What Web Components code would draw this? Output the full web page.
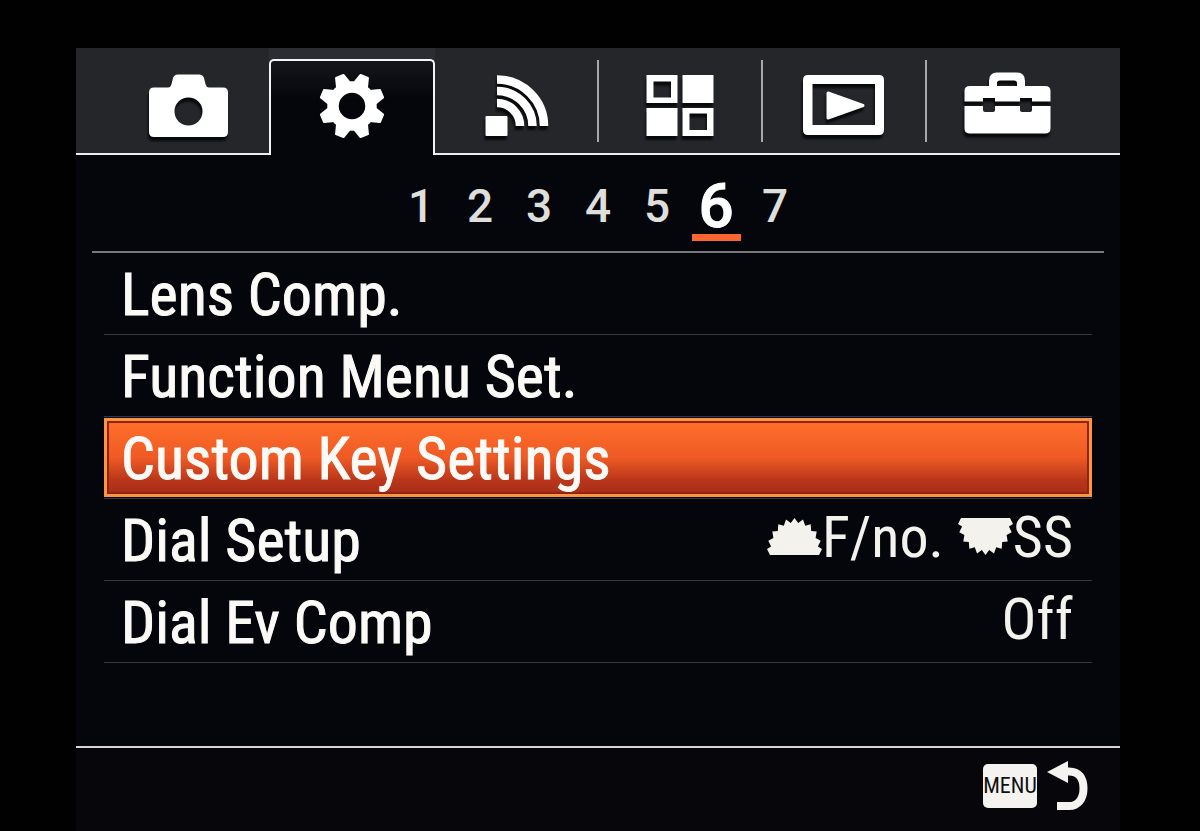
<!DOCTYPE html>
<html lang="en">
<head>
<meta charset="utf-8">
<meta name="viewport" content="width=device-width, initial-scale=1">
<title>Camera menu</title>
<style>
    body {
        margin: 0;
        background: #010102;
        color: #fbfaf7;
        font-family: "Roboto Condensed", Roboto, sans-serif;
    }
</style>
</head>
<body>

<camera-screen>
    <menu-tab slot="tabs" label="Camera settings">
        <svg viewBox="0 0 96 72"><path fill-rule="evenodd" d="M14 17.500H28Q30.500 17.500 31.500 14L33 8Q34 4.500 38 4.500H59Q63 4.500 64 8L65.500 14Q66.500 17.500 69 17.500H83Q88 17.500 88 22.500V62Q88 67 83 67H14Q9 67 9 62V22.500Q9 17.500 14 17.500ZM48.500 27.500A14 14 0 1 0 48.500 55.500A14 14 0 1 0 48.500 27.500Z"/></svg>
    </menu-tab>
    <menu-tab slot="tabs" label="Custom settings" active>
        <svg viewBox="0 0 96 72">
            <g transform="translate(48 36)">
                <circle r="19" fill="none" stroke="#fff" stroke-width="11.500"/>
                <g stroke="#fff" stroke-width="2" stroke-linejoin="round">
                    <path transform="rotate(22.500)" d="M-7-22L-4-32H4L7-22Z"/>
                    <path transform="rotate(67.500)" d="M-7-22L-4-32H4L7-22Z"/>
                    <path transform="rotate(112.500)" d="M-7-22L-4-32H4L7-22Z"/>
                    <path transform="rotate(157.500)" d="M-7-22L-4-32H4L7-22Z"/>
                    <path transform="rotate(202.500)" d="M-7-22L-4-32H4L7-22Z"/>
                    <path transform="rotate(247.500)" d="M-7-22L-4-32H4L7-22Z"/>
                    <path transform="rotate(292.500)" d="M-7-22L-4-32H4L7-22Z"/>
                    <path transform="rotate(337.500)" d="M-7-22L-4-32H4L7-22Z"/>
                </g>
            </g>
        </svg>
    </menu-tab>
    <menu-tab slot="tabs" label="Wireless">
        <svg viewBox="0 0 96 72">
            <g fill="none" stroke="#fff" stroke-width="8.500">
                <path d="M29 9.500A47 46.500 0 0 1 76 56"/>
                <path d="M29 21A35.500 35 0 0 1 64.500 56"/>
                <path d="M29 33A23 23 0 0 1 52 56"/>
            </g>
            <rect x="17.500" y="46" width="22" height="20" rx="1"/>
        </svg>
    </menu-tab>
    <menu-tab slot="tabs" label="Applications" divider>
        <svg viewBox="0 0 96 72"><path fill-rule="evenodd" d="M14.500 5h31v28h-31ZM21.500 11.500v16H39v-16ZM50.500 5h31v28h-31ZM14.500 38h31v28h-31ZM50.500 38h31v28h-31ZM57.500 43.500V60H75V43.500Z"/></svg>
    </menu-tab>
    <menu-tab slot="tabs" label="Playback" divider>
        <svg viewBox="0 0 96 72">
            <path fill-rule="evenodd" d="M12 5H83Q88 5 88 10V60Q88 65 83 65H12Q7 65 7 60V10Q7 5 12 5ZM16.500 14V55H79V14Z"/>
            <path d="M32 23L67 35.500L32 48Z" stroke="#fff" stroke-width="3" stroke-linejoin="round"/>
        </svg>
    </menu-tab>
    <menu-tab slot="tabs" label="Setup" divider>
        <svg viewBox="0 0 96 72">
            <path d="M10 16H29V11Q29 2.500 37 2.500H57Q65 2.500 65 11V16H85Q90.500 16 90.500 21V31.500H72V28H60V31.500H35V28H23V31.500H4.500V21Q4.500 16 10 16ZM37 16H57V13Q57 10.500 54 10.500H40Q37 10.500 37 13Z" fill-rule="evenodd"/>
            <path d="M4.500 36H23V40Q23 42 25 42H33Q35 42 35 40V36H60V40Q60 42 62 42H70Q72 42 72 40V36H90.500V58.500Q90.500 63.500 85 63.500H10Q4.500 63.500 4.500 58.500Z"/>
        </svg>
    </menu-tab>

    <page-numbers slot="pages" count="7" current="6"></page-numbers>

    <menu-row>Lens Comp.</menu-row>
    <menu-row>Function Menu Set.</menu-row>
    <menu-row selected>Custom Key Settings</menu-row>
    <menu-row>Dial Setup
        <dial-value slot="value">F/no.</dial-value>
        <dial-value slot="value" rear>SS</dial-value>
    </menu-row>
    <menu-row>Dial Ev Comp<span slot="value">Off</span></menu-row>

    <back-button slot="footer">MENU</back-button>
</camera-screen>

<script>
class CameraScreen extends HTMLElement {

    constructor() {
        super();
        this.attachShadow({mode: "open"});
    }

    connectedCallback() {
        this.shadowRoot.innerHTML = `
        <style>
            :host {
                display: flex;
                flex-direction: column;
                box-sizing: border-box;
                min-height: 100vh;
                padding: 48px 80px 0 76px;
            }

            nav {
                display: grid;
                grid-template-columns: repeat(6, 1fr);
                height: 107px;
                box-sizing: border-box;
                padding: 0 31px 0 29px;
                background: #24262a;
                border-bottom: 2px solid #eeedf0;
            }

            main {
                flex: 1;
                background: #05060b;
                border-bottom: 2px solid #d9d6d2;
            }

            .rows {
                padding: 0 28px;
            }

            footer {
                display: flex;
                justify-content: flex-end;
                align-items: center;
                height: 83px;
                box-sizing: border-box;
                padding: 0 31px 8px 0;
                background: #07070b;
            }
        </style>

        <nav role="tablist"><slot name="tabs"></slot></nav>
        <main>
            <slot name="pages"></slot>
            <div class="rows"><slot></slot></div>
        </main>
        <footer><slot name="footer"></slot></footer>
        `;
    }
}

class MenuTab extends HTMLElement {

    constructor() {
        super();
        this.attachShadow({mode: "open"});
    }

    connectedCallback() {
        this.shadowRoot.innerHTML = `
        <style>
            :host {
                display: flex;
                align-items: flex-start;
                padding-top: 12px;
            }

            button {
                display: flex;
                flex: 1;
                justify-content: center;
                align-items: center;
                height: 82px;
                box-sizing: border-box;
                padding: 10px 0 0;
                background: none;
                border: 0;
                border-left: 2px solid transparent;
                cursor: pointer;
            }

            :host([divider]) button {
                border-left-color: #a4a9ac;
            }

            :host([active]) {
                margin: 0 -2px -2px 0;
                padding-top: 11px;
                background: #2b2d32;
            }

            :host([active]) button {
                height: 96px;
                padding: 0 0 4px;
                background: linear-gradient(#14161b, #05060b 40%);
                border: 2px solid #f4f3f5;
                border-bottom: 0;
                border-radius: 5px 5px 0 0;
            }

            ::slotted(svg) {
                width: 96px;
                height: 72px;
                fill: #fff;
                filter: drop-shadow(-1px 4px 1px #08090b);
            }
        </style>

        <button role="tab" aria-label="${this.getAttribute("label")}" aria-selected="${this.hasAttribute("active")}">
            <slot></slot>
        </button>
        `;
    }
}

class PageNumbers extends HTMLElement {

    constructor() {
        super();
        this.attachShadow({mode: "open"});
    }

    connectedCallback() {
        const current = Number(this.getAttribute("current"));
        let pages = "";
        for (let i = 1; i <= Number(this.getAttribute("count")); i++) {
            pages += `<button${i === current ? ' aria-current="page"' : ""}>${i}</button>`;
        }

        this.shadowRoot.innerHTML = `
        <style>
            :host {
                display: flex;
                justify-content: center;
                align-items: center;
                height: 96px;
                margin: 0 16px;
                border-bottom: 2px solid #77787b;
            }

            button {
                width: 59px;
                height: 68px;
                padding: 3px 0 0;
                background: none;
                border: 0;
                color: #dededb;
                font: 500 46px/68px Roboto, sans-serif;
                cursor: pointer;
            }

            button[aria-current] {
                position: relative;
                color: #fff;
                font-size: 62px;
                -webkit-text-stroke: 1px currentColor;
            }

            button[aria-current]::after {
                content: "";
                position: absolute;
                left: 5px;
                right: 5px;
                bottom: -4px;
                height: 7px;
                background: #fb6631;
            }
        </style>

        ${pages}
        `;
    }
}

class MenuRow extends HTMLElement {

    constructor() {
        super();
        this.attachShadow({mode: "open"});
    }

    connectedCallback() {
        this.shadowRoot.innerHTML = `
        <style>
            :host {
                display: flex;
                align-items: center;
                height: 81px;
                border-bottom: 1px solid #36383b;
            }

            button {
                display: flex;
                flex: 1;
                justify-content: space-between;
                align-items: center;
                height: 79px;
                box-sizing: border-box;
                padding: 0 16px 0 14px;
                background: none;
                border: 3px solid transparent;
                color: inherit;
                font: inherit;
                font-size: 60px;
                line-height: 70px;
                text-align: left;
                white-space: nowrap;
                cursor: pointer;
            }

            .label {
                padding-top: 3px;
                -webkit-text-stroke: 1px currentColor;
            }

            :host([selected]) button {
                background: linear-gradient(#ff6f2b, #ef5a25 50%, #b8351a 82%, #a82e18);
                border-color: #fb9443;
                box-shadow: inset 0 0 0 2px #8f2411;
            }

            .value {
                display: flex;
                gap: 14px;
                padding-bottom: 6px;
                font-size: 58px;
                color: #f3f2ed;
            }
        </style>

        <button>
            <span class="label"><slot></slot></span>
            <span class="value"><slot name="value"></slot></span>
        </button>
        `;
    }
}

class DialValue extends HTMLElement {

    constructor() {
        super();
        this.attachShadow({mode: "open"});
    }

    // half of a toothed wheel, flat side down
    wheelPath() {
        const steps = 20;
        let path = "M3 37L0 31";
        for (let i = 1; i < steps; i++) {
            const angle = Math.PI * (1 - i / steps);
            const r = i % 2 ? 0.86 : 1;
            const x = 27.5 + 27.5 * r * Math.cos(angle);
            const y = 33 - 33 * r * Math.sin(angle);
            path += `L${x.toFixed(1)} ${y.toFixed(1)}`;
        }
        return path + "L55 31L52 37Z";
    }

    connectedCallback() {
        this.shadowRoot.innerHTML = `
        <style>
            :host {
                display: inline-flex;
                align-items: center;
            }

            svg {
                width: 55px;
                height: 37px;
                fill: #f3f2ed;
            }

            :host([rear]) svg {
                transform: scaleY(-1);
            }
        </style>

        <svg viewBox="0 0 55 37" aria-hidden="true"><path d="${this.wheelPath()}"/></svg>
        <slot></slot>
        `;
    }
}

class BackButton extends HTMLElement {

    constructor() {
        super();
        this.attachShadow({mode: "open"});
    }

    connectedCallback() {
        this.shadowRoot.innerHTML = `
        <style>
            :host {
                display: block;
            }

            button {
                display: flex;
                align-items: center;
                gap: 10px;
                padding: 0;
                background: none;
                border: 0;
                font: inherit;
                cursor: pointer;
            }

            .key {
                width: 54px;
                height: 44px;
                background: #f4f3f0;
                border-radius: 5px;
                color: #101012;
                font-size: 22px;
                line-height: 44px;
                text-align: center;
            }

            svg {
                width: 42px;
                height: 50px;
            }
        </style>

        <button>
            <span class="key"><slot></slot></span>
            <svg viewBox="0 0 42 50" aria-hidden="true">
                <path d="M0 11L21 0V22Z" fill="#f4f3f0"/>
                <path d="M20 10.500H22C32 10.500 36.500 17 36.500 27.500S31 45 22 45H10" fill="none" stroke="#f4f3f0" stroke-width="8"/>
            </svg>
        </button>
        `;
    }
}

customElements.define("camera-screen", CameraScreen);
customElements.define("menu-tab", MenuTab);
customElements.define("page-numbers", PageNumbers);
customElements.define("menu-row", MenuRow);
customElements.define("dial-value", DialValue);
customElements.define("back-button", BackButton);
</script>
</body>
</html>
